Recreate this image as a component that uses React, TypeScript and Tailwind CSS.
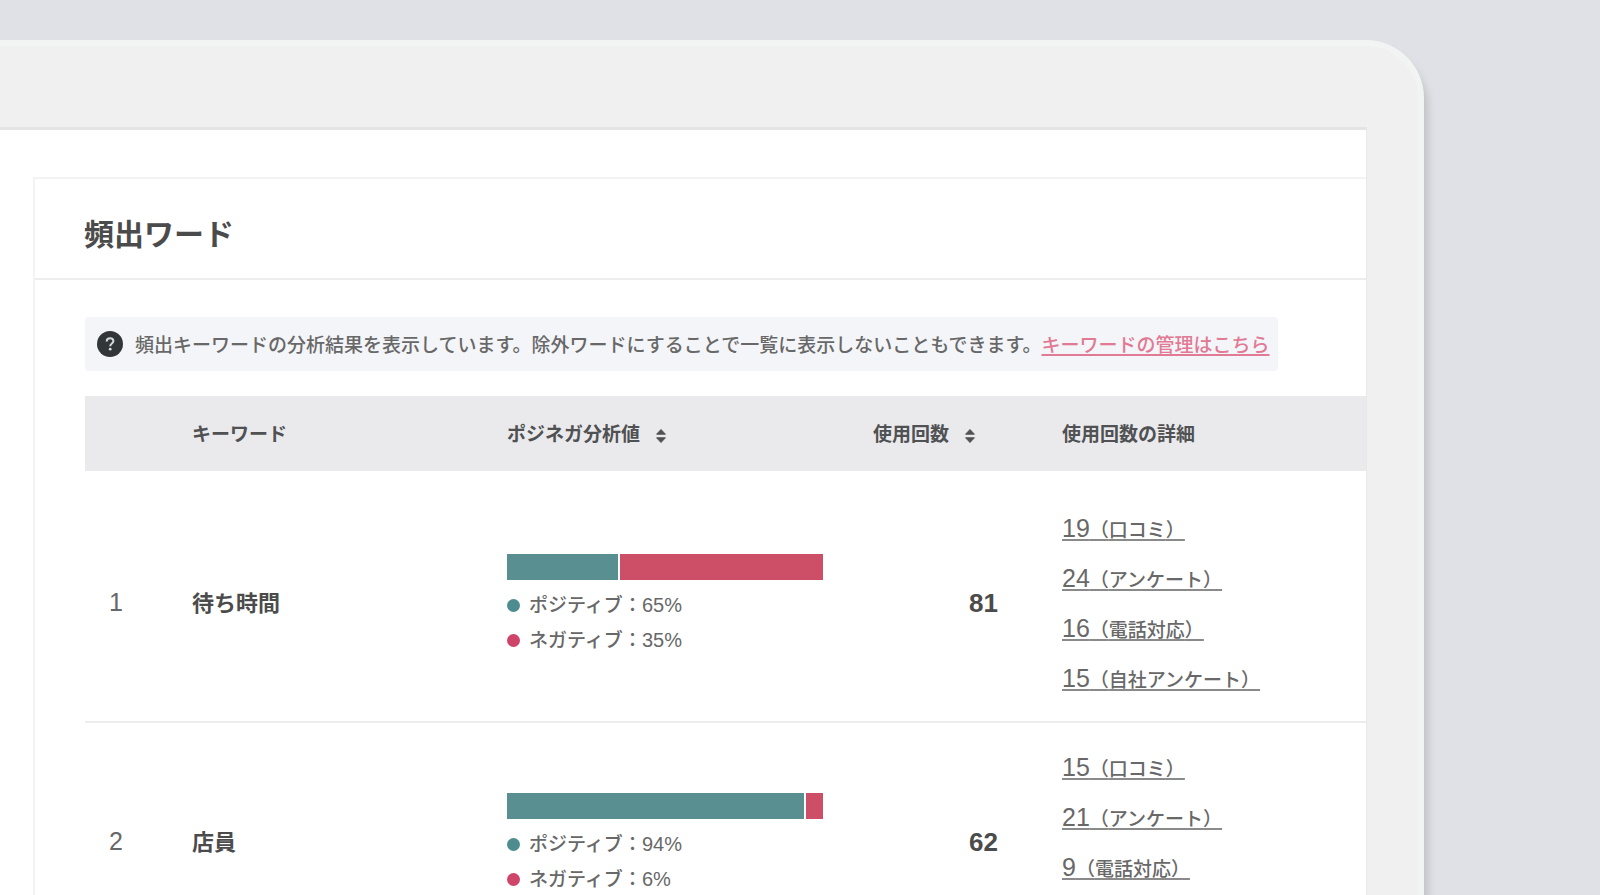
import { clsx } from 'clsx'

type Detail = {
  count: number
  source: string
}

type Keyword = {
  rank: number
  word: string
  positive: number
  negative: number
  // share of the bar that is filled with the positive colour
  barShare: number
  total: number
  details: Detail[]
}

const keywords: Keyword[] = [
  {
    rank: 1,
    word: '待ち時間',
    positive: 65,
    negative: 35,
    barShare: 35,
    total: 81,
    details: [
      { count: 19, source: '口コミ' },
      { count: 24, source: 'アンケート' },
      { count: 16, source: '電話対応' },
      { count: 15, source: '自社アンケート' },
    ],
  },
  {
    rank: 2,
    word: '店員',
    positive: 94,
    negative: 6,
    barShare: 94,
    total: 62,
    details: [
      { count: 15, source: '口コミ' },
      { count: 21, source: 'アンケート' },
      { count: 9, source: '電話対応' },
    ],
  },
]

const SortIcon = () => (
  <svg width="12" height="16" viewBox="0 0 12 16" fill="currentColor" aria-hidden="true">
    <path d="M6 1.5 10.4 6.2H1.6z" stroke="currentColor" strokeWidth="1" strokeLinejoin="round" />
    <path d="M6 14.5 1.6 9.8h8.8z" stroke="currentColor" strokeWidth="1" strokeLinejoin="round" />
  </svg>
)

const SortButton = ({ children }: { children: string }) => (
  <button type="button" className="inline-flex items-center gap-[15px] font-bold">
    {children}
    <SortIcon />
  </button>
)

const HelpIcon = () => (
  <svg width="26" height="26" viewBox="0 0 26 26" className="shrink-0" aria-hidden="true">
    <circle cx="13" cy="13" r="13" fill="#333638" />
    <path
      d="M9.7 10.4c0-1.9 1.4-3.1 3.4-3.1s3.3 1.1 3.3 2.8c0 2.5-3.2 2.4-3.2 5.1"
      fill="none"
      stroke="#d5d7d8"
      strokeWidth="2"
    />
    <circle cx="13.2" cy="18.2" r="1.4" fill="#d5d7d8" />
  </svg>
)

const SentimentBar = ({ share }: { share: number }) => (
  <div className="flex h-[26px] w-[316px] gap-[2px]">
    <div className="bg-[#5a8f92]" style={{ width: `${share}%` }} />
    <div className="flex-1 bg-[#cc4f67]" />
  </div>
)

const Legend = ({ label, value, dot }: { label: string; value: number; dot: string }) => (
  <li className="flex h-[35px] items-center gap-[9px]">
    <span className={clsx('size-[13px] rounded-full', dot)} />
    <span>
      {label}：<span className="text-[20px]">{value}%</span>
    </span>
  </li>
)

const KeywordRow = ({ item, first }: { item: Keyword; first: boolean }) => {
  const cell = first ? 'pt-8 pb-[18px]' : 'pt-[19px] pb-[18px]'

  return (
    <tr className="border-b-2 border-[#ededed]">
      <td className={clsx(cell, 'pl-6 text-[25px]')}>{item.rank}</td>
      <th scope="row" className={clsx(cell, 'text-left text-[22px] font-bold text-[#4b4b4b]')}>
        {item.word}
      </th>
      <td className={cell}>
        <div className="pt-[6px]">
          <SentimentBar share={item.barShare} />
          <ul className="mt-2">
            <Legend label="ポジティブ" value={item.positive} dot="bg-[#4d8d90]" />
            <Legend label="ネガティブ" value={item.negative} dot="bg-[#cf4469]" />
          </ul>
        </div>
      </td>
      <td className={clsx(cell, 'pr-16 text-right text-[26px] font-bold text-[#4b4b4b]')}>
        {item.total}
      </td>
      <td className={cell}>
        <ul className="min-h-[200px]">
          {item.details.map((detail) => (
            <li key={detail.source} className="h-[50px] leading-[50px]">
              <a href="#" className="underline decoration-[#8a8a8a] decoration-2 underline-offset-2">
                <span className="text-[25px]">{detail.count}</span>（{detail.source}）
              </a>
            </li>
          ))}
        </ul>
      </td>
    </tr>
  )
}

const KeywordTable = () => (
  <table className="w-full table-fixed border-collapse">
    <colgroup>
      <col className="w-[107px]" />
      <col className="w-[315px]" />
      <col className="w-[340px]" />
      <col className="w-[215px]" />
      <col />
    </colgroup>
    <thead>
      <tr className="h-[75px] bg-[#eaeaed] text-left text-[#505153]">
        <td />
        <th scope="col" className="pt-1">
          キーワード
        </th>
        <th scope="col" className="pt-1">
          <SortButton>ポジネガ分析値</SortButton>
        </th>
        <th scope="col" className="pt-1 pr-[86px] text-right">
          <SortButton>使用回数</SortButton>
        </th>
        <th scope="col" className="pt-1">
          使用回数の詳細
        </th>
      </tr>
    </thead>
    <tbody>
      {keywords.map((item, index) => (
        <KeywordRow key={item.rank} item={item} first={index === 0} />
      ))}
    </tbody>
  </table>
)

const App = () => {
  return (
    <div className="h-screen overflow-hidden bg-[#e0e1e6] pt-10 pr-44 font-['Liberation_Sans','Noto_Sans_CJK_JP',sans-serif] text-[19px] font-medium text-[#686868]">
      {/* tablet body */}
      <div className="min-h-full rounded-tr-[58px] border-t-[6px] border-r-[6px] border-[#f2f3f3] bg-[#f0f0f0] pt-[81px] pr-[51px] shadow-[4px_10px_8px_#bfc1c4]">
        <main className="border-t-[3px] border-r border-t-[#e4e4e4] border-r-[#e8e8e8] bg-white pt-[47px] pl-[33px]">
          <section className="border-t-2 border-l-2 border-[#f3f3f3]">
            <h1 className="flex h-[101px] items-center border-b-2 border-[#ededed] pt-3 pl-[49px] text-[30px] font-bold text-[#4b4b4b]">
              頻出ワード
            </h1>
            <div className="pt-[37px] pl-[50px]">
              <div className="flex h-[54px] w-fit items-center gap-3 rounded-sm bg-[#f4f5f8] pr-2 pl-3 whitespace-nowrap">
                <HelpIcon />
                <p className="pt-1">
                  頻出キーワードの分析結果を表示しています。除外ワードにすることで一覧に表示しないこともできます。
                  <a href="#" className="text-[#e07a95] underline decoration-2 underline-offset-2">
                    キーワードの管理はこちら
                  </a>
                </p>
              </div>
              <div className="mt-[25px]">
                <KeywordTable />
              </div>
            </div>
          </section>
        </main>
      </div>
    </div>
  )
}

export default App
